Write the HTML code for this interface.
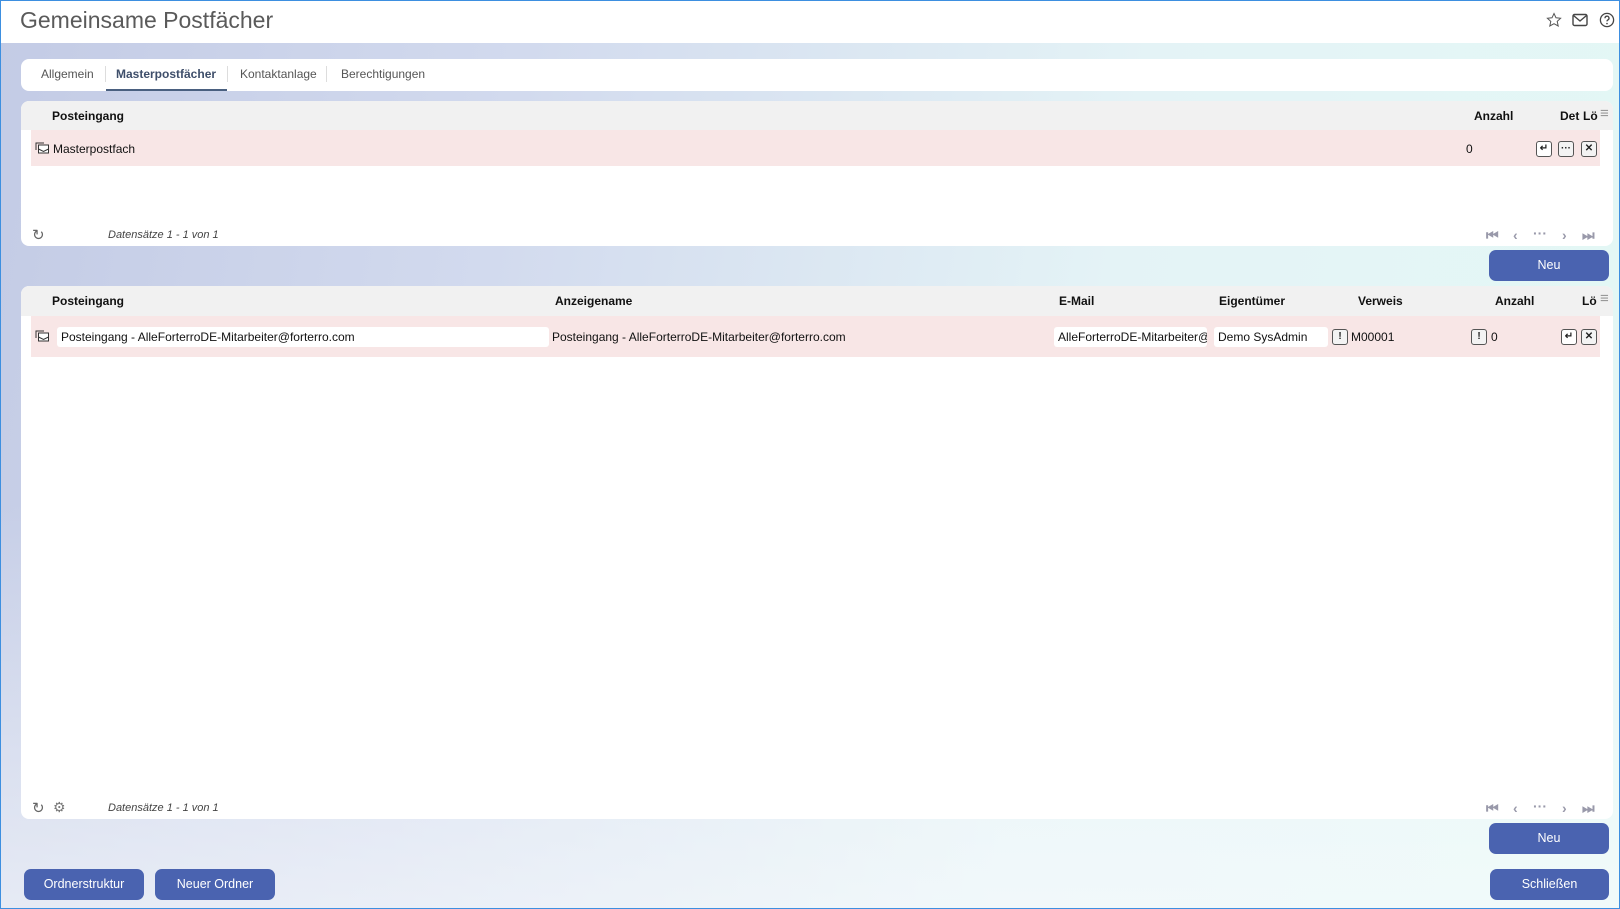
<!DOCTYPE html>
<html><head><meta charset="utf-8"><style>
*{margin:0;padding:0;box-sizing:border-box}
body{width:1620px;height:909px;overflow:hidden;font-family:"Liberation Sans",Arial,sans-serif;font-size:12px;color:#111;position:relative;
background:linear-gradient(180deg,rgba(255,255,255,0) 0%,rgba(255,255,255,0) 55%,rgba(250,252,253,.6) 100%),linear-gradient(100deg,#c3cbe5 0%,#d2daee 30%,#e4f3f6 65%,#e3f8f5 100%);}
.frame{position:absolute;inset:0;border:1px solid #3d8fe0;pointer-events:none;z-index:10}
.top{position:absolute;left:0;top:0;width:1620px;height:43px;background:#fff}
.title{position:absolute;left:20px;top:7px;font-size:23px;color:#5a5a5a}
.a{position:absolute;white-space:nowrap}
.panel{position:absolute;background:#fff;border-radius:8px}
.hdr{position:absolute;background:#f1f1f1;border-radius:8px 8px 0 0}
.b{font-weight:bold}
.pink{position:absolute;background:#f8e6e6}
.inp{position:absolute;background:#fff;border-radius:3px;height:20px;padding:3px 4px;overflow:hidden;white-space:nowrap}
.btn{position:absolute;background:#4a63b0;color:#fff;border-radius:7px;text-align:center;font-size:12.5px;line-height:31px}
.foot{position:absolute;font-style:italic;font-size:11px;color:#444}
.ib{position:absolute;width:16px;height:16px;border:1.3px solid #555;border-radius:3px;background:#fff;font-size:10px;font-weight:bold;line-height:13px;text-align:center;color:#222}
.pg{position:absolute;color:#99a;font-size:14px;font-weight:bold}
.tab{position:absolute;top:67px;color:#555}
</style></head><body>
<div class="top"></div>
<div class="title">Gemeinsame Postfächer</div>
<svg class="a" style="left:1546px;top:12px" width="16" height="16" viewBox="0 0 16 16"><path d="M8 1.5l2 4.3 4.6.5-3.4 3.1 1 4.6L8 11.7 3.8 14l1-4.6L1.4 6.3 6 5.8z" fill="none" stroke="#555" stroke-width="1"/></svg>
<svg class="a" style="left:1572px;top:13px" width="16" height="14" viewBox="0 0 16 14"><rect x="1" y="1.5" width="14" height="11" rx="1.5" fill="none" stroke="#444" stroke-width="1.4"/><path d="M1.5 2.5L8 8l6.5-5.5" fill="none" stroke="#444" stroke-width="1.4"/></svg>
<svg class="a" style="left:1599px;top:12px" width="16" height="16" viewBox="0 0 16 16"><circle cx="8" cy="8" r="6.6" fill="none" stroke="#444" stroke-width="1.3"/><path d="M6 6.2a2 2 0 1 1 2.8 1.8c-.6.3-.8.7-.8 1.4" fill="none" stroke="#444" stroke-width="1.3"/><circle cx="8" cy="11.6" r=".8" fill="#444"/></svg>

<div class="panel" style="left:21px;top:59px;width:1592px;height:32px"></div>
<div class="tab" style="left:41px">Allgemein</div>
<div class="a" style="left:105px;top:66px;width:1px;height:16px;background:#ddd"></div>
<div class="tab b" style="left:116px;color:#3e4e6a">Masterpostfächer</div>
<div class="a" style="left:106px;top:89px;width:121px;height:2px;background:#4a6080"></div>
<div class="a" style="left:227px;top:66px;width:1px;height:16px;background:#ddd"></div>
<div class="tab" style="left:240px">Kontaktanlage</div>
<div class="a" style="left:326px;top:66px;width:1px;height:16px;background:#ddd"></div>
<div class="tab" style="left:341px">Berechtigungen</div>

<!-- table 1 -->
<div class="panel" style="left:21px;top:101px;width:1592px;height:145px"></div>
<div class="hdr" style="left:21px;top:101px;width:1592px;height:29px"></div>
<div class="a b" style="left:52px;top:109px">Posteingang</div>
<div class="a b" style="left:1474px;top:109px">Anzahl</div>
<div class="a b" style="left:1560px;top:109px">Det</div>
<div class="a b" style="left:1583px;top:109px">Lö</div>
<div class="a" style="left:1600px;top:105px;color:#999;font-size:15px">≡</div>
<div class="pink" style="left:31px;top:130px;width:1569px;height:36px"></div>
<svg class="a" style="left:35px;top:141px" width="15" height="14" viewBox="0 0 15 14"><path d="M1 9V2h8" fill="none" stroke="#333"/><rect x="3.5" y="4" width="10" height="8" fill="#fff" stroke="#333"/><path d="M3.5 8l5 2.5 5-2.5" fill="none" stroke="#333"/></svg>
<div class="a" style="left:53px;top:142px">Masterpostfach</div>
<div class="a" style="left:1466px;top:142px">0</div>
<div class="ib" style="left:1536px;top:141px">↵</div>
<div class="ib" style="left:1558px;top:141px;background:#f3f3f3">···</div>
<div class="ib" style="left:1581px;top:141px;background:#f3f3f3">✕</div>
<div class="a" style="left:32px;top:226px;color:#666;font-size:15px">↻</div>
<div class="foot" style="left:108px;top:229px">Datensätze 1 - 1 von 1</div>
<div class="pg" style="left:1486px;top:227px">⏮</div><div class="pg" style="left:1513px;top:227px">‹</div><div class="pg" style="left:1533px;top:225px">···</div><div class="pg" style="left:1562px;top:227px">›</div><div class="pg" style="left:1582px;top:227px">⏭</div>
<div class="btn" style="left:1489px;top:250px;width:120px">Neu</div>

<!-- table 2 -->
<div class="panel" style="left:21px;top:286px;width:1592px;height:533px"></div>
<div class="hdr" style="left:21px;top:286px;width:1592px;height:30px"></div>
<div class="a b" style="left:52px;top:294px">Posteingang</div>
<div class="a b" style="left:555px;top:294px">Anzeigename</div>
<div class="a b" style="left:1059px;top:294px">E-Mail</div>
<div class="a b" style="left:1219px;top:294px">Eigentümer</div>
<div class="a b" style="left:1358px;top:294px">Verweis</div>
<div class="a b" style="left:1495px;top:294px">Anzahl</div>
<div class="a b" style="left:1582px;top:294px">Lö</div>
<div class="a" style="left:1600px;top:290px;color:#999;font-size:15px">≡</div>
<div class="pink" style="left:31px;top:316px;width:1569px;height:41px"></div>
<svg class="a" style="left:35px;top:329px" width="15" height="14" viewBox="0 0 15 14"><path d="M1 9V2h8" fill="none" stroke="#333"/><rect x="3.5" y="4" width="10" height="8" fill="#fff" stroke="#333"/><path d="M3.5 8l5 2.5 5-2.5" fill="none" stroke="#333"/></svg>
<div class="inp" style="left:57px;top:327px;width:492px">Posteingang - AlleForterroDE-Mitarbeiter@forterro.com</div>
<div class="a" style="left:552px;top:330px">Posteingang - AlleForterroDE-Mitarbeiter@forterro.com</div>
<div class="inp" style="left:1054px;top:327px;width:153px">AlleForterroDE-Mitarbeiter@forterro.com</div>
<div class="inp" style="left:1214px;top:327px;width:114px">Demo SysAdmin</div>
<div class="ib" style="left:1332px;top:329px;background:#f3f3f3">!</div>
<div class="a" style="left:1351px;top:330px">M00001</div>
<div class="ib" style="left:1471px;top:329px;background:#f3f3f3">!</div>
<div class="a" style="left:1491px;top:330px">0</div>
<div class="ib" style="left:1561px;top:329px">↵</div>
<div class="ib" style="left:1581px;top:329px;background:#f3f3f3">✕</div>
<div class="a" style="left:32px;top:799px;color:#666;font-size:15px">↻</div>
<div class="a" style="left:53px;top:799px;color:#777;font-size:14px">⚙</div>
<div class="foot" style="left:108px;top:802px">Datensätze 1 - 1 von 1</div>
<div class="pg" style="left:1486px;top:800px">⏮</div><div class="pg" style="left:1513px;top:800px">‹</div><div class="pg" style="left:1533px;top:798px">···</div><div class="pg" style="left:1562px;top:800px">›</div><div class="pg" style="left:1582px;top:800px">⏭</div>
<div class="btn" style="left:1489px;top:823px;width:120px">Neu</div>

<div class="btn" style="left:24px;top:869px;width:120px">Ordnerstruktur</div>
<div class="btn" style="left:155px;top:869px;width:120px">Neuer Ordner</div>
<div class="btn" style="left:1490px;top:869px;width:119px">Schließen</div>
<div class="frame"></div>
</body></html>
